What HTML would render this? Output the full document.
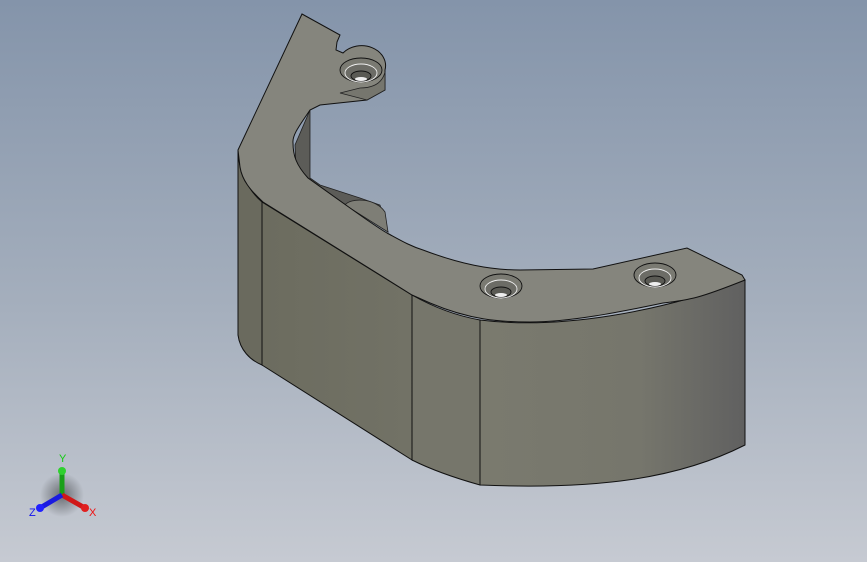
<!DOCTYPE html>
<html><head><meta charset="utf-8"><style>
html,body{margin:0;padding:0;width:867px;height:562px;overflow:hidden;background:#a9b1be}
svg{display:block}
</style></head><body>
<svg width="867" height="562" viewBox="0 0 867 562" xmlns="http://www.w3.org/2000/svg">
<defs>
<linearGradient id="bg" x1="0" y1="0" x2="0" y2="1">
<stop offset="0" stop-color="#8494aa"/><stop offset="0.55" stop-color="#a5afbd"/><stop offset="1" stop-color="#c6cad2"/>
</linearGradient>
<linearGradient id="rf" x1="0" y1="0" x2="1" y2="0">
<stop offset="0" stop-color="#7a7a6e"/><stop offset="0.6" stop-color="#76766c"/><stop offset="1" stop-color="#606060"/>
</linearGradient>
<linearGradient id="mf" x1="0" y1="0" x2="1" y2="0">
<stop offset="0" stop-color="#6c6c5f"/><stop offset="1" stop-color="#727266"/>
</linearGradient>
<radialGradient id="sh" cx="0.5" cy="0.5" r="0.5">
<stop offset="0" stop-color="#000" stop-opacity="0.45"/><stop offset="1" stop-color="#000" stop-opacity="0"/>
</radialGradient>
</defs>
<rect width="867" height="562" fill="url(#bg)"/>
<path d="M310,110 L295,145 L296,168 L308,178 L343,203 L388,232 L380,205 L360,198 L320,185 L310,178 Z" fill="#5c5c58" stroke="#222" stroke-width="0.8"/>
<path d="M345,205 C350,198 375,197 385,212 L388,232 Z" fill="#7e7e76" stroke="#222" stroke-width="0.8"/>
<path d="M238,150 L238,335 C240,350 250,360 262,365 L262,202 C248,190 238,170 238,150 Z" fill="#6a6a5e" stroke="#111" stroke-width="1"/>
<path d="M262,202 L412,295 L412,460 L262,365 Z" fill="url(#mf)" stroke="#111" stroke-width="1"/>
<path d="M412,295 C435,308 458,316 480,320 L480,485 C455,478 432,470 412,460 Z" fill="#76766b" stroke="#111" stroke-width="1"/>
<path d="M480,320 C560,330 660,312 745,280 L745,445 C680,478 600,490 480,485 Z" fill="url(#rf)" stroke="#111" stroke-width="1"/>
<path d="M302,14 L340,35 L337,42 L336,50 L343,53 A24 20 0 0 1 385,70 L385,90 L367,100 L320,105 L310,110 C300,125 292,135 293,143 C293,155 296,165 308,178 L343,203 C360,215 375,226 387,233 C400,240 410,246 423,250 C460,264 490,270 520,270 L593,269 L687,248 L742,275 L745,280 C700,298 690,300 663,303 C620,312 570,322 530,322 C500,322 470,320 430,303 L412,295 L263,202 C250,190 242,180 240,167 L238,150 Z" fill="#85857d" stroke="#111" stroke-width="1"/>
<path d="M340,93 L367,100 L385,90 L385,72 C382,84 372,88 360,88 Z" fill="#76766e" stroke="#222" stroke-width="0.8"/>
<g stroke="#111" stroke-width="0.9">
<ellipse cx="361" cy="70" rx="21" ry="12" fill="#7a7a72"/>
<ellipse cx="361" cy="73" rx="16" ry="9" fill="#6c6c66" stroke="#eee"/>
<ellipse cx="361" cy="76" rx="10" ry="5" fill="#5a5a54"/>
<ellipse cx="361" cy="79" rx="6" ry="2" fill="#eee" stroke="none"/>
<ellipse cx="501" cy="286" rx="21" ry="12" fill="#7a7a72"/>
<ellipse cx="501" cy="289" rx="16" ry="9" fill="#6c6c66" stroke="#eee"/>
<ellipse cx="501" cy="292" rx="10" ry="5" fill="#5a5a54"/>
<ellipse cx="501" cy="295" rx="6" ry="2" fill="#eee" stroke="none"/>
<ellipse cx="655" cy="275" rx="21" ry="12" fill="#7a7a72"/>
<ellipse cx="655" cy="278" rx="16" ry="9" fill="#6c6c66" stroke="#eee"/>
<ellipse cx="655" cy="281" rx="10" ry="5" fill="#5a5a54"/>
<ellipse cx="655" cy="284" rx="6" ry="2" fill="#eee" stroke="none"/>
</g>
<circle cx="62" cy="495" r="22" fill="url(#sh)"/>
<path d="M62,495 L62,470" stroke="#19a019" stroke-width="5"/>
<circle cx="62" cy="471" r="4" fill="#2fd02f"/>
<path d="M62,495 L85,508" stroke="#d01818" stroke-width="5"/>
<circle cx="85" cy="508" r="4" fill="#e02020"/>
<path d="M62,495 L40,508" stroke="#1a1ae0" stroke-width="5"/>
<circle cx="40" cy="508" r="4" fill="#2020ff"/>
<text x="59" y="462" font-family="Liberation Sans,sans-serif" font-size="11" fill="#1c1">Y</text>
<text x="89" y="516" font-family="Liberation Sans,sans-serif" font-size="11" fill="#e11">X</text>
<text x="29" y="516" font-family="Liberation Sans,sans-serif" font-size="11" fill="#11e">Z</text>
</svg>
</body></html>
